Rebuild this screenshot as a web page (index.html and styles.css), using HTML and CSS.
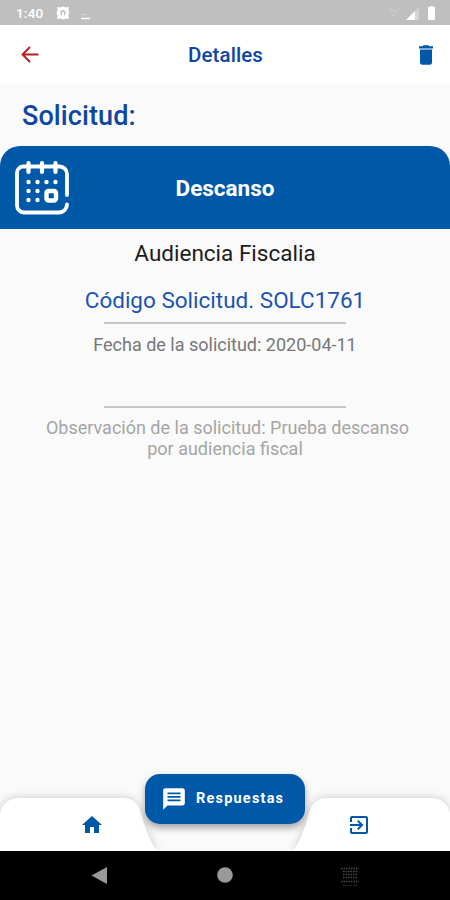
FILE: index.html
```html
<!DOCTYPE html>
<html lang="es">
<head>
<meta charset="utf-8">
<title>Detalles</title>
<link rel="stylesheet" href="styles.css">
</head>
<body>
<div class="app">
  <div class="status">
    <span class="time">1:40</span>
    <svg class="st-gear" width="14" height="14" viewBox="0 0 14 14"><path fill="#fff" fill-rule="evenodd" d="M1 1l3 .6L7 .5l3 1.100L13 1l-.6 3.500L13.500 7l-1.100 2.500.6 3.500-3-.6-3 1.100-3-1.100-3 .6.6-3.500L.5 7l1.100-2.500zM7 4l-2.500 1v2.200c0 1.500 1 2.600 2.500 3.100 1.500-.5 2.500-1.600 2.500-3.100V5z"/><path fill="#fff" d="M6 6h2v5H6z"/></svg>
    <svg class="st-dl" width="11" height="14" viewBox="0 0 11 14"><path stroke="#fff" stroke-width="1.500" d="M1 12.500h9"/><path stroke="#ddd" d="M2 8.500h2M5 8.500h2"/></svg>
    <svg class="st-right" width="50" height="16" viewBox="0 0 50 16"><path d="M3 3l5 9 6-9M5 3l6 5M5 7l7-3" fill="none" stroke="#d2d2d2" stroke-dasharray="1.500 1"/><path fill="#d4d4d4" d="M33 2v13H20z"/><path fill="#fff" d="M29 6v9h-9z"/><path fill="#fff" d="M42 2h2V1h3v1h2v13h-7z"/></svg>
  </div>
  <header class="bar">
    <svg class="back" width="24" height="24" viewBox="0 0 24 24"><path fill="none" stroke="#b52024" stroke-width="1.900" d="M20.500 11.500H5M12 4L4.500 11.500 12 19"/></svg>
    <h1>Detalles</h1>
    <svg class="trash" width="24" height="26" viewBox="0 0 24 24" preserveAspectRatio="none"><path fill="#0059a8" d="M6 19c0 1.100.9 2 2 2h8c1.100 0 2-.9 2-2V7H6v12zM19 4h-3.500l-1-1h-5l-1 1H5v2h14V4z"/></svg>
  </header>
  <main>
    <h2>Solicitud:</h2>
    <section class="banner">
      <svg class="cal" width="56" height="56" viewBox="0 0 56 56" fill="none" stroke="#fff" stroke-linecap="round">
        <path stroke-width="3.800" d="M53 35V14a7.500 7.500 0 0 0-7.500-7.500h-37A6.500 6.500 0 0 0 3 13v32.500a7 7 0 0 0 7 7H45a8 8 0 0 0 8-8"/>
        <path stroke-width="4.200" d="M14.500 3v9M28 3v9M41.500 3v9"/>
        <path stroke-width="4.400" d="M14.500 22h0M23.500 22h0M32.500 22h0M41.500 22h0M14.500 31h0M23.500 31h0M14.500 40h0M23.500 40h0"/>
        <rect x="32.500" y="31" width="9.500" height="9.500" rx="2" stroke-width="4.400"/>
      </svg>
      <strong>Descanso</strong>
    </section>
    <p class="kind">Audiencia Fiscalia</p>
    <p class="code">Código Solicitud. SOLC1761</p>
    <div class="rule"></div>
    <p class="date">Fecha de la solicitud: 2020-04-11</p>
    <div class="rule"></div>
    <p class="note"><span class="first">Observación de la solicitud: Prueba descanso</span><br>por audiencia fiscal</p>
  </main>
  <footer class="tabs">
    <svg class="shape" width="450" height="61" viewBox="0 0 450 61"><path fill="#fff" d="M0 61V23Q4 8 20 8H122C135 8 139 15 142 26C146 41 150 51 157 61zM450 61V23Q446 8 430 8H328C315 8 311 15 308 26C304 41 300 51 293 61z"/></svg>
    <a class="tab"><svg width="24" height="24" viewBox="0 0 24 24"><path fill="#0059a8" d="M10 20v-6h4v6h5v-8h3L12 3 2 12h3v8z"/></svg></a>
    <button class="fab"><svg width="26" height="26" viewBox="0 0 24 24"><path fill="#fff" d="M20 2H4c-1.100 0-2 .9-2 2v18l4-4h14c1.100 0 2-.9 2-2V4c0-1.100-.9-2-2-2zM6 6h12v1.600H6zm0 3.200h12v1.600H6zm0 3.200h12V14H6z"/></svg>Respuestas</button>
    <a class="tab"><svg width="24" height="24" viewBox="0 0 24 24"><path fill="#0059a8" d="M10.090 15.590L11.500 17l5-5-5-5-1.410 1.410L12.670 11H3v2h9.670zM19 3H5c-1.110 0-2 .9-2 2v4h2V5h14v14H5v-4H3v4c0 1.100.89 2 2 2h14c1.100 0 2-.9 2-2V5c0-1.100-.9-2-2-2z"/></svg></a>
  </footer>
  <nav class="sys">
    <svg width="450" height="49" viewBox="0 0 450 49"><path fill="#999" d="M91.500 24.500L107 16v17z"/><circle cx="225" cy="24" r="7.800" fill="#999"/><g stroke="#4a4a4a" stroke-width="1.300" stroke-dasharray="1.500 1"><path d="M341 17.500h18M343 20.500h14M343 23.500h14M343 26.500h14M341 30.500h18"/><path stroke="#2a2a2a" d="M343 34.500h14"/></g></svg>
  </nav>
</div>
</body>
</html>
```
FILE: styles.css
```css
* { box-sizing: border-box; }
body { margin: 0; font-family: Roboto, sans-serif; }
h1, h2, p { margin: 0; font-weight: 400; }
svg { display: block; flex: none; }
.app { width: 450px; height: 900px; display: flex; flex-direction: column; background: #fafafa; overflow: hidden; }
.status { height: 25px; background: #bfbfbf; color: #fff; display: flex; align-items: center; padding: 1px 14px 0 16px; }
.time { font-size: 13.500px; font-weight: 500; width: 40px; letter-spacing: .2px; }
.st-dl { margin-left: 10px; }
.st-right { margin-left: auto; }
.bar { height: 59px; background: #fff; display: flex; align-items: center; justify-content: space-between; padding: 0 12px 0 18px; }
.bar h1 { font-size: 20.500px; font-weight: 500; color: #0d47a1; letter-spacing: .1px; margin-right: 5px; }
main { flex: 1; text-align: center; }
h2 { height: 62px; padding: 0 22px; text-align: left; line-height: 64px; font-size: 27px; font-weight: 500; color: #0d47a1; letter-spacing: .1px; }
.banner { height: 83px; background: #0059a8; border-radius: 20px 20px 0 0; display: grid; grid-template-columns: 56px 1fr 56px; align-items: center; padding: 0 14px; color: #fff; }
.banner strong { font-size: 22.500px; font-weight: 700; }
.kind { height: 47px; line-height: 49px; font-size: 22.500px; color: #1c1c1c; }
.code { height: 46px; line-height: 49px; font-size: 22.500px; color: #1b54ae; }
.rule { width: 242px; height: 2px; margin: 0 auto; background: #c6c6c6; }
.date { height: 82px; padding-top: 10px; line-height: 22px; font-size: 18px; color: #777; }
.note { padding-top: 9px; line-height: 21px; font-size: 18px; color: #a5a5a5; }
.first { padding-left: 5px; }
.tabs { height: 61px; display: grid; grid-template-columns: 1fr 160px 1fr; align-items: center; position: relative; }
.shape { position: absolute; left: 0; top: 0; filter: drop-shadow(0 0 5px rgba(0,0,0,.2)); }
.tab { position: relative; padding-top: 8px; }
.tab:first-of-type { padding-left: 80px; }
.tab:last-of-type { padding-left: 42px; }
.fab { position: relative; width: 160px; height: 50px; margin-top: -44px; border: 0; border-radius: 15px; background: #0059a8; box-shadow: 0 4px 7px rgba(0,0,0,.35); color: #fff; display: flex; align-items: center; gap: 9px; padding: 0 0 0 16px; font: 700 14.500px Roboto, sans-serif; letter-spacing: 1.200px; }
.sys { height: 49px; background: #000; position: relative; }
```
